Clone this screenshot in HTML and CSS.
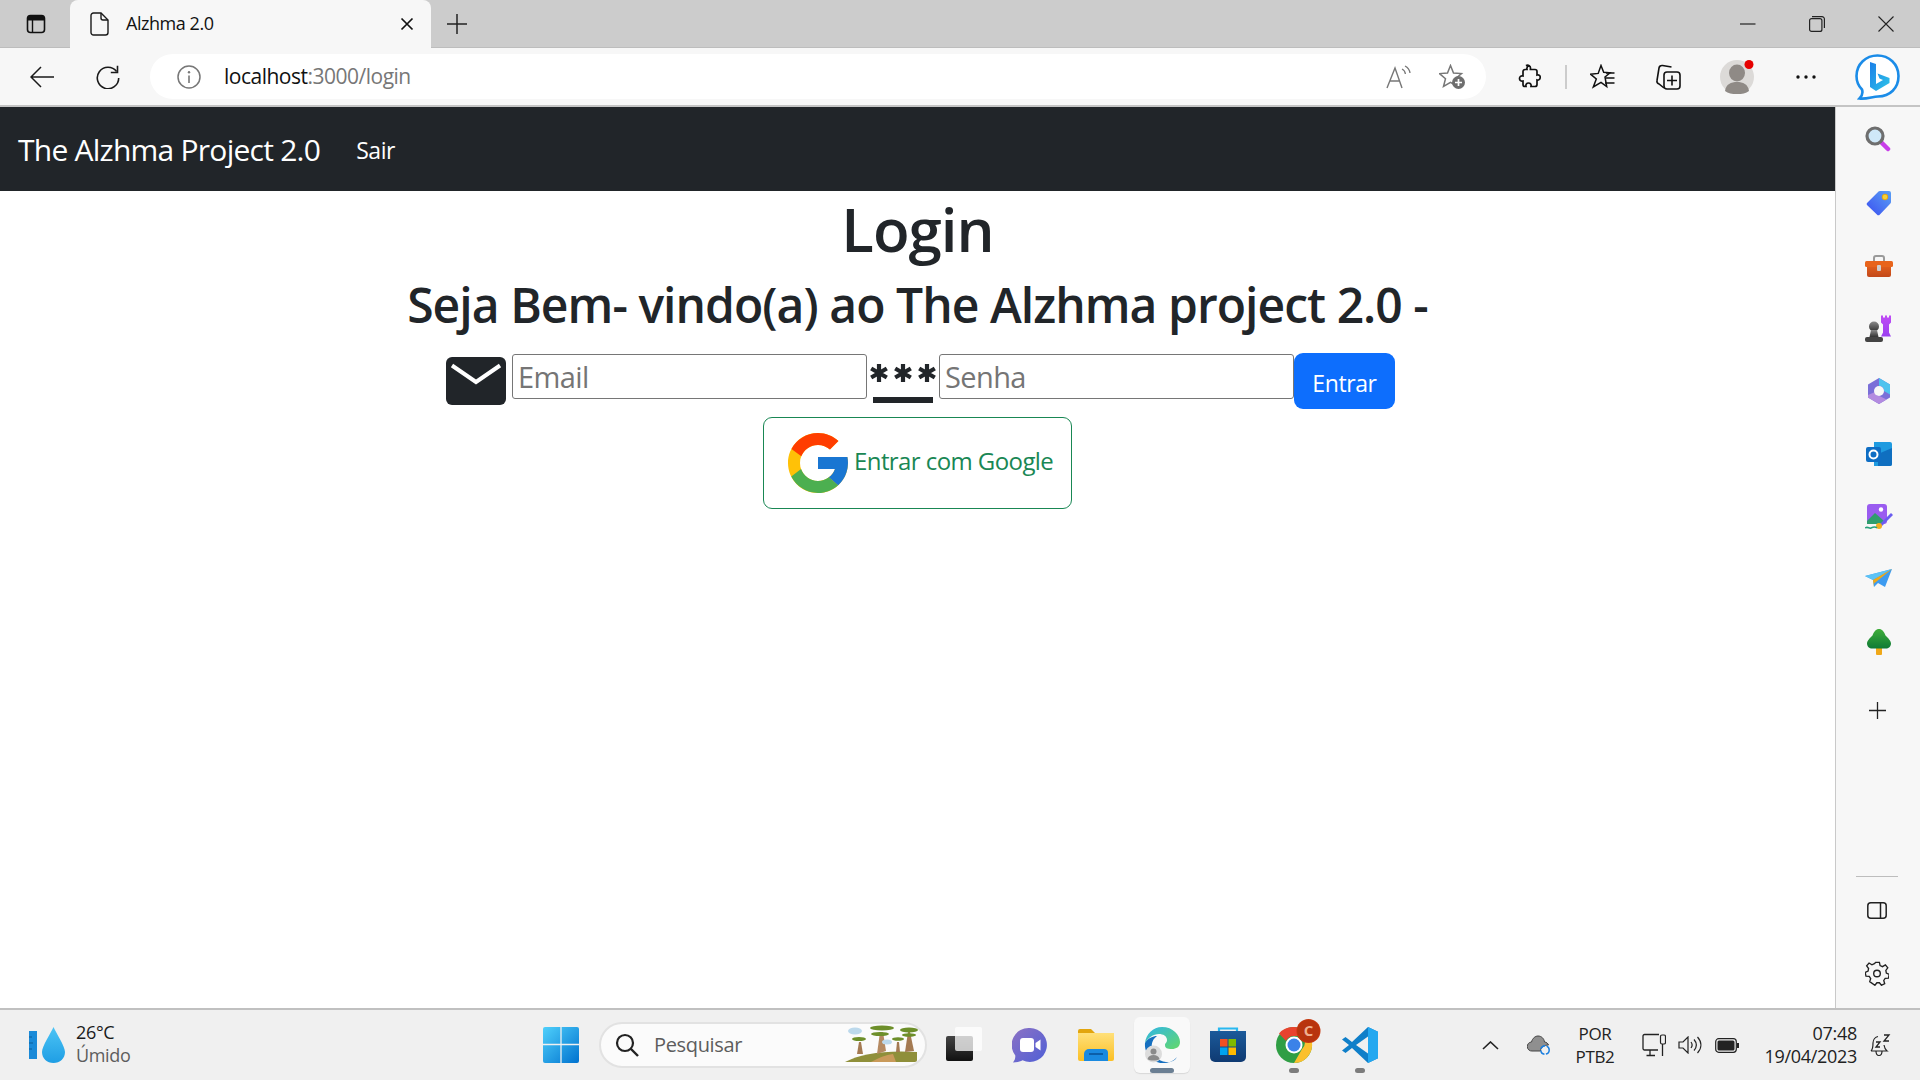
FILE: index.html
```html
<!DOCTYPE html>
<html lang="pt-BR">
<head>
<meta charset="utf-8">
<title>Alzhma 2.0</title>
<link rel="stylesheet" href="styles.css">
</head>
<body>
<svg class="defs" width="0" height="0">
  <defs>
    <linearGradient id="gWin" x1="0" y1="0" x2="1" y2="1"><stop offset="0" stop-color="#4fd0fb"/><stop offset="1" stop-color="#0072cf"/></linearGradient>
    <linearGradient id="gDrop" x1="0" y1="0" x2="0" y2="1"><stop offset="0" stop-color="#4cc4f5"/><stop offset="1" stop-color="#1f9ee4"/></linearGradient>
    <linearGradient id="gTag" x1="0" y1="1" x2="1" y2="0"><stop offset="0" stop-color="#3b4ff0"/><stop offset="1" stop-color="#5aa0f5"/></linearGradient>
    <linearGradient id="gBox" x1="0" y1="0" x2="0" y2="1"><stop offset="0" stop-color="#ee6a1f"/><stop offset="1" stop-color="#c2481a"/></linearGradient>
    <linearGradient id="gPawn" x1="0" y1="0" x2="0" y2="1"><stop offset="0" stop-color="#8a8a8a"/><stop offset="1" stop-color="#333"/></linearGradient>
    <linearGradient id="gRook" x1="0" y1="0" x2="0" y2="1"><stop offset="0" stop-color="#c04cf5"/><stop offset="1" stop-color="#9a3ff0"/></linearGradient>
    <linearGradient id="gTree" x1="0" y1="0" x2="0" y2="1"><stop offset="0" stop-color="#3fae3a"/><stop offset="1" stop-color="#0f7a35"/></linearGradient>
    <linearGradient id="gTeams" x1="0" y1="0" x2="1" y2="1"><stop offset="0" stop-color="#8c72c4"/><stop offset="1" stop-color="#4f5fd6"/></linearGradient>
    <linearGradient id="gEdge" x1="0" y1="0" x2="1" y2="1"><stop offset="0" stop-color="#2fb6e8"/><stop offset="1" stop-color="#63d86a"/></linearGradient>
    <linearGradient id="gFold" x1="0" y1="0" x2="0" y2="1"><stop offset="0" stop-color="#ffe07a"/><stop offset="1" stop-color="#fbbf24"/></linearGradient>
    <linearGradient id="gStore" x1="0" y1="0" x2="0" y2="1"><stop offset="0" stop-color="#1b5a9a"/><stop offset="1" stop-color="#0f3a72"/></linearGradient>
    <linearGradient id="gBing" x1="0" y1="0" x2="1" y2="1"><stop offset="0" stop-color="#1b7fe8"/><stop offset="1" stop-color="#2fc5e8"/></linearGradient>
    <linearGradient id="gTask" x1="0" y1="0" x2="0" y2="1"><stop offset="0" stop-color="#444"/><stop offset="1" stop-color="#111"/></linearGradient>
  </defs>
</svg>

<div class="tabstrip">
  <div class="strip-side">
    <svg width="20" height="20" viewBox="0 0 20 20"><rect x="1.5" y="1.5" width="17" height="17" rx="3" fill="none" stroke="#111" stroke-width="1.6"/><path d="M1.5 4.5a3 3 0 0 1 3-3h11a3 3 0 0 1 3 3v2h-17z" fill="#111"/><path d="M6.5 6v12" stroke="#111" stroke-width="1.4"/></svg>
  </div>
  <div class="tab">
    <svg class="tab-fav" width="19" height="24" viewBox="0 0 19 24"><path d="M3.5 1h7.5l7 7v12.5a2.5 2.5 0 0 1-2.5 2.5h-12a2.5 2.5 0 0 1-2.5-2.5v-17a2.5 2.5 0 0 1 2.5-2.5z" fill="none" stroke="#1a1a1a" stroke-width="1.4"/><path d="M11 1v5a2 2 0 0 0 2 2h5" fill="none" stroke="#1a1a1a" stroke-width="1.4"/></svg>
    <span class="tab-title">Alzhma 2.0</span>
    <svg class="tab-x" width="14" height="14" viewBox="0 0 14 14"><path d="M1.5 1.5l11 11M12.5 1.5l-11 11" stroke="#111" stroke-width="1.7"/></svg>
  </div>
  <svg class="tab-plus" width="20" height="20" viewBox="0 0 20 20"><path d="M10 0v20M0 10h20" stroke="#222" stroke-width="1.5"/></svg>
  <div class="win-ctrls">
    <div class="win-btn"><svg width="16" height="16" viewBox="0 0 16 16"><path d="M0 8h15.5" stroke="#222" stroke-width="1.2"/></svg></div>
    <div class="win-btn"><svg width="16" height="16" viewBox="0 0 16 16"><rect x=".6" y="2.6" width="12.3" height="12.8" rx="2" fill="none" stroke="#222" stroke-width="1.2"/><path d="M3 .6h10a2.4 2.4 0 0 1 2.4 2.4v9" fill="none" stroke="#222" stroke-width="1.2"/></svg></div>
    <div class="win-btn"><svg width="16" height="16" viewBox="0 0 16 16"><path d="M.5.5l15 15M15.5.5l-15 15" stroke="#222" stroke-width="1.1"/></svg></div>
  </div>
</div>

<div class="toolbar">
  <div class="tool"><svg width="24" height="22" viewBox="0 0 24 22"><path d="M1 11h23M11 1L1 11l10 10" fill="none" stroke="#1a1a1a" stroke-width="1.5"/></svg></div>
  <div class="tool"><svg width="24" height="24" viewBox="0 0 24 24"><path d="M20.6 6.6A10.7 10.7 0 1 0 22.7 13" fill="none" stroke="#1a1a1a" stroke-width="1.6"/><path d="M21.5 .8v6.7h-6.7" fill="none" stroke="#1a1a1a" stroke-width="1.6"/></svg></div>
  <div class="address">
    <svg class="addr-info" width="24" height="24" viewBox="0 0 24 24"><circle cx="12" cy="12" r="11" fill="none" stroke="#777" stroke-width="1.5"/><circle cx="12" cy="7.2" r="1.2" fill="#777"/><path d="M12 10.5v7.5" stroke="#777" stroke-width="1.6"/></svg>
    <span class="url"><span class="url-host">localhost</span>:3000/login</span>
    <svg class="addr-read" width="25" height="24" viewBox="0 0 25 24"><path d="M1 23L9 3l7 20M4 16h10" fill="none" stroke="#777" stroke-width="1.4"/><path d="M16 4c2 1 3.200 3 3.400 5M19 1c3 1.500 4.600 4 5 7" fill="none" stroke="#777" stroke-width="1.3"/></svg>
    <svg class="addr-star" width="27" height="26" viewBox="0 0 27 26"><path d="M11.500 1.500l3 7.500 8 .6-6 5.200 2 7.700-7-4.200-7 4.200 2-7.700-6-5.200 8-.6z" fill="none" stroke="#777" stroke-width="1.500"/><circle cx="19.500" cy="18.500" r="6.500" fill="#6e6e6e"/><path d="M19.500 15v7M16 18.500h7" stroke="#fff" stroke-width="1.700"/></svg>
  </div>
  <div class="tool-right">
    <svg class="t-ext" width="24" height="25" viewBox="0 0 24 25"><path d="M9 1.500c2.500-1 4.500.5 4.500 2.500l-.1 1.500h4.600a2 2 0 0 1 2 2v3.500c2-.6 3.400.8 3.200 2.500-.2 2-1.700 3-3.200 2.500v4.500a2 2 0 0 1-2 2h-4c.5-2-.6-3.500-2.500-3.500s-3 1.500-2.500 3.500h-1a2 2 0 0 1-2-2v-3.500c-2 .5-3.500-.6-3.500-2.500s1.500-3 3.500-2.500v-4.500c0-1.100.900-2 2-2h2c-.4-1.500 0-3 2-4z" fill="none" stroke="#111" stroke-width="1.700"/></svg>
    <div class="t-sep"></div>
    <svg class="t-fav" width="25" height="25" viewBox="0 0 25 25"><path d="M11 1.500l2.700 6.800 6.300.5-5 4.200 1.700 9.500-5.700-4.200-7.700 4.700 3-8-5.800-4.800 7.700-.8z" fill="none" stroke="#111" stroke-width="1.500"/><path d="M16 9h8.500M16 14h8.500M15 19h9.500" stroke="#111" stroke-width="1.500"/></svg>
    <svg class="t-col" width="26" height="26" viewBox="0 0 26 26"><path d="M9 24L4 20a3 3 0 0 1-2-3.500L4 4a3 3 0 0 1 3.500-2.500l9 1.500" fill="none" stroke="#111" stroke-width="1.600"/><rect x="9" y="8" width="16" height="17" rx="3" fill="#f7f7f7" stroke="#111" stroke-width="1.600"/><path d="M17 11.500v10M12 16.500h10" stroke="#111" stroke-width="1.600"/></svg>
    <svg class="t-ava" width="37" height="36" viewBox="0 0 37 36"><ellipse cx="17" cy="18" rx="17" ry="17" fill="#dcdad8"/><ellipse cx="17" cy="14" rx="8" ry="8.500" fill="#8f8a86"/><path d="M5 32c1-7 6-9 12-9s11 2 12 9c-3 2.500-7 3-12 3s-9-.5-12-3z" fill="#8f8a86"/><circle cx="29" cy="5.500" r="4.500" fill="#e60000"/></svg>
    <svg class="t-dots" width="20" height="4" viewBox="0 0 20 4"><circle cx="2" cy="2" r="1.700" fill="#111"/><circle cx="10" cy="2" r="1.700" fill="#111"/><circle cx="18" cy="2" r="1.700" fill="#111"/></svg>
    <svg class="t-bing" width="45" height="46" viewBox="0 0 45 46"><path d="M22.500 1.500C34 1.500 43.500 10 43.500 22S35 42.500 23 42.500c-5 0-12 3-18.500 2 3-3 3.500-6 2.500-9C3.500 32 1.500 27 1.500 22 1.500 10 11 1.500 22.500 1.500z" fill="#fff" stroke="#1b8ce8" stroke-width="2.600"/><path d="M15 8l6 2v20l7-4-3.500-1.500-2-5 12 4.500v5l-13.500 8-6-4z" fill="url(#gBing)"/></svg>
  </div>
</div>

<div class="middle">
  <main class="page">
    <nav class="navbar">
      <a class="brand">The Alzhma Project 2.0</a>
      <a class="nav-link">Sair</a>
    </nav>
    <h1 class="title">Login</h1>
    <h2 class="subtitle">Seja Bem- vindo(a) ao The Alzhma project 2.0 -</h2>
    <form class="login-row">
      <svg class="mail-icon" width="60" height="48" viewBox="0 0 60 48"><rect width="60" height="48" rx="6" fill="#212529"/><path d="M6 8.500L30 25 54 8.500" fill="none" stroke="#fff" stroke-width="4"/></svg>
      <input class="field" type="text" placeholder="Email">
      <svg class="pass-icon" width="66" height="48" viewBox="0 0 66 48"><g stroke="#212529" stroke-width="4.200"><path d="M9 9v18M1.200 13.500l15.600 9M1.200 22.500l15.600-9"/><path d="M33 9v18M25.200 13.500l15.600 9M25.200 22.500l15.600-9"/><path d="M57 9v18M49.200 13.500l15.600 9M49.200 22.500l15.600-9"/></g><rect x="3" y="42" width="60" height="6" fill="#212529"/></svg>
      <input class="field" type="password" placeholder="Senha">
      <button class="btn-primary" type="button">Entrar</button>
    </form>
    <button class="btn-google" type="button">
      <svg width="60" height="60" viewBox="4 4 40 40"><path fill="#FFC107" d="M43.611,20.083H42V20H24v8h11.303c-1.649,4.657-6.08,8-11.303,8c-6.627,0-12-5.373-12-12c0-6.627,5.373-12,12-12c3.059,0,5.842,1.154,7.961,3.039l5.657-5.657C34.046,6.053,29.268,4,24,4C12.955,4,4,12.955,4,24c0,11.045,8.955,20,20,20c11.045,0,20-8.955,20-20C44,22.659,43.862,21.35,43.611,20.083z"/><path fill="#FF3D00" d="M6.306,14.691l6.571,4.819C14.655,15.108,18.961,12,24,12c3.059,0,5.842,1.154,7.961,3.039l5.657-5.657C34.046,6.053,29.268,4,24,4C16.318,4,9.656,8.337,6.306,14.691z"/><path fill="#4CAF50" d="M24,44c5.166,0,9.86-1.977,13.409-5.192l-6.19-5.238C29.211,35.091,26.715,36,24,36c-5.202,0-9.619-3.317-11.283-7.946l-6.522,5.025C9.505,39.556,16.227,44,24,44z"/><path fill="#1976D2" d="M43.611,20.083H42V20H24v8h11.303c-0.792,2.237-2.231,4.166-4.087,5.571c0.001-0.001,0.002-0.001,0.003-0.002l6.19,5.238C36.971,39.205,44,34,44,24C44,22.659,43.862,21.35,43.611,20.083z"/></svg>
      <span class="google-label">Entrar com Google</span>
    </button>
  </main>
  <aside class="sidebar">
    <svg class="sb s1" width="26" height="26" viewBox="0 0 26 26"><path d="M16 16l7 7" stroke="#c83fe8" stroke-width="4.500" stroke-linecap="round"/><circle cx="10" cy="10" r="8" fill="#cfe8f8" stroke="#6e6e6e" stroke-width="3.200"/></svg>
    <svg class="sb s2" width="26" height="26" viewBox="0 0 26 26"><path d="M14 1h9a2 2 0 0 1 2 2v9a2 2 0 0 1-.6 1.500l-10.500 11a2 2 0 0 1-3 0L1.500 15.500a2 2 0 0 1 0-3L12.500 1.600A2 2 0 0 1 14 1z" fill="url(#gTag)"/><circle cx="19" cy="7" r="2.800" fill="#f4d13a" stroke="#e8a80c"/></svg>
    <svg class="sb s3" width="28" height="23" viewBox="0 0 28 23"><path d="M9 6V3a2 2 0 0 1 2-2h6a2 2 0 0 1 2 2v3" fill="none" stroke="#9a9a9a" stroke-width="2"/><rect x="2" y="6" width="24" height="16" rx="2" fill="url(#gBox)"/><rect y="6" width="28" height="6" rx="1.500" fill="#e8641c"/><rect x="12" y="10" width="4" height="6" rx="1" fill="#cfcfcf"/></svg>
    <svg class="sb s4" width="28" height="28" viewBox="0 0 28 28"><path d="M16 1h2v2h2V1h2v2h2V1h2v7l-2 2v8l2 4H16l2-4v-8l-2-2z" fill="url(#gRook)" transform="translate(0 -.5)"/><circle cx="9" cy="11.500" r="5" fill="url(#gPawn)"/><path d="M6 15h6l1.500 7h-9z" fill="url(#gPawn)"/><rect y="22" width="18" height="5" rx="2" fill="#444"/></svg>
    <svg class="sb s5" width="26" height="26" viewBox="0 0 26 26"><path d="M13 0l11 6.500v13L13 26 2 19.500v-13z" fill="#7a6fd8"/><path d="M13 0l11 6.500v10l-6-3.500c0-3-2-5-5-5z" fill="#4fc3ee"/><path d="M2 17l7-3c.500 2.500 2 4 4.500 4l7 3.500L13 26 2 19.500z" fill="#b38be0"/><circle cx="13" cy="13" r="5" fill="#f7f7f7"/></svg>
    <svg class="sb s6" width="26" height="24" viewBox="0 0 26 24"><path d="M8 0h16a2 2 0 0 1 2 2v20a2 2 0 0 1-2 2H8z" fill="#1f9be0"/><path d="M12 12l14-6v16a2 2 0 0 1-2 2H12z" fill="#0f6fc0"/><rect y="5" width="15" height="15" rx="2" fill="#0f6ec4"/><circle cx="7.500" cy="12.500" r="4" fill="none" stroke="#fff" stroke-width="2"/></svg>
    <svg class="sb s7" width="28" height="27" viewBox="0 0 28 27"><rect x="2" y="0" width="20" height="20" rx="3" fill="#9a5cf0"/><circle cx="16" cy="5.500" r="2.200" fill="#fff"/><path d="M2 17l8-8 9 8v3H2z" fill="#2f9e6e"/><path d="M14 21L26 9l2 2-12 12z" fill="#6a5cf0"/><circle cx="14" cy="22" r="3" fill="#f0b020"/><path d="M0 24c3-2 4 1 6 0s4-2 6 0" fill="none" stroke="#26a17a" stroke-width="1.500"/></svg>
    <svg class="sb s8" width="27" height="20" viewBox="0 0 27 20"><path d="M0 7L27 0 20 18l-7-4-4 4-1-7z" fill="#3d9bf0"/><path d="M0 7l27-7-19 11z" fill="#5cc3f5"/><path d="M8 11L27 0 9 14.500 9 18z" fill="#f0a818"/></svg>
    <svg class="sb s9" width="24" height="26" viewBox="0 0 24 26"><rect x="9" y="18" width="6" height="8" rx="1" fill="#f0a818"/><path d="M12 0c3 0 5 2.500 6.500 6.500 2 2 5.500 5 5.500 8 0 3-2.500 5-5 5H5c-2.500 0-5-2-5-5 0-3 3.500-6 5.500-8C7 2.500 9 0 12 0z" fill="url(#gTree)"/></svg>
    <svg class="sb s10" width="17" height="17" viewBox="0 0 17 17"><path d="M8.500 0v17M0 8.500h17" stroke="#222" stroke-width="1.300"/></svg>
    <div class="sb-spacer"></div>
    <div class="sb-sep"></div>
    <svg class="sb s11" width="20" height="17" viewBox="0 0 20 17"><rect x=".8" y=".8" width="18.400" height="15.400" rx="3" fill="none" stroke="#222" stroke-width="1.500"/><path d="M13.500 1v15" stroke="#222" stroke-width="1.500"/></svg>
    <svg class="sb s12" width="24" height="25" viewBox="0 0 24 25"><path d="M10 1h4l.7 3.300 2.500 1.100 3-1.800 2.500 3-2 2.700.5 2.700 3 1.500-.8 3.800-3.400.2-1.500 2.300 1 3.200-3.400 1.800-2.100-2.600h-2.600l-2.100 2.600L3.900 21l1-3.200L3.400 15.500 0 15.300l-.8-3.800 3-1.500.5-2.700-2-2.700 2.500-3 3 1.800 2.500-1.100z" transform="translate(.5 0) scale(.96 .96) translate(.5 .5)" fill="none" stroke="#222" stroke-width="1.400"/><circle cx="12" cy="12.500" r="3.300" fill="none" stroke="#222" stroke-width="1.400"/></svg>
  </aside>
</div>

<footer class="taskbar">
  <div class="weather">
    <svg width="36" height="36" viewBox="0 0 36 36"><rect y="4" width="8" height="28" fill="#1a8ad8"/><path d="M0 10h3M0 16h4M0 22h3" stroke="#0d5f9a" stroke-width="1.200"/><path d="M24.500 0c2.500 6 11.500 19 11.500 25 0 6.500-5 11-11.500 11S13 31.500 13 25C13 19 22 6 24.500 0z" fill="url(#gDrop)"/></svg>
    <div class="weather-text"><span class="w-temp">26°C</span><span class="w-cond">Úmido</span></div>
  </div>
  <div class="task-center">
    <svg class="t-win" width="36" height="36" viewBox="0 0 36 36"><g fill="url(#gWin)"><rect width="36" height="36" rx="2"/></g><path d="M18 0v36M0 17.500h36" stroke="#f0f0f0" stroke-width="1.300"/></svg>
    <div class="searchbox">
      <svg width="24" height="24" viewBox="0 0 24 24"><circle cx="10" cy="10" r="8" fill="none" stroke="#222" stroke-width="2.200"/><path d="M16 16l7 7" stroke="#222" stroke-width="2.400"/></svg>
      <span class="search-label">Pesquisar</span>
      <svg class="search-art" width="74" height="40" viewBox="0 0 74 40"><path d="M0 38c15-8 40-12 72-10v8c0 2-2 2-4 2z" fill="#8f8f3a"/><path d="M26 38c10-5 14-7 22-8l3 8z" fill="#c99a5a"/><path d="M32 30l3-22h3l3 19z" fill="#b58a62"/><path d="M60 28l3-20h2l4 19z" fill="#a47a52"/><path d="M12 30l2-12h2l2 12z" fill="#a47a52"/><path d="M51 28l1-10h2l1 10z" fill="#a47a52"/><g fill="#6d8f2a"><ellipse cx="37" cy="4" rx="12" ry="2.500"/><ellipse cx="35" cy="10" rx="9" ry="2"/><ellipse cx="64" cy="6" rx="9" ry="2.500"/><ellipse cx="64" cy="11" rx="7" ry="1.800"/><ellipse cx="14" cy="15" rx="7" ry="2"/><ellipse cx="53" cy="15" rx="6" ry="1.800"/></g><ellipse cx="10" cy="7" rx="7" ry="3.500" fill="#bcd9ec"/><ellipse cx="42" cy="18" rx="5" ry="2.500" fill="#bcd9ec"/></svg>
    </div>
    <div class="task-slots">
      <div class="slot"><svg width="36" height="35" viewBox="0 0 36 35"><rect y="9" width="27" height="25" rx="2" fill="url(#gTask)"/><rect x="9" y="0" width="27" height="24" rx="2" fill="#fff" fill-opacity=".75"/></svg></div>
      <div class="slot"><svg width="36" height="36" viewBox="0 0 36 36"><path d="M18 1a17 17 0 1 1-7.500 32.300C8 35 4 35.500 1 35.500c1.500-2 2.500-4 2.300-7A17 17 0 0 1 18 1z" fill="url(#gTeams)"/><rect x="8" y="11" width="14" height="14" rx="3" fill="#fff"/><path d="M23.500 16l5-3.500v11l-5-3.500z" fill="#fff"/></svg></div>
      <div class="slot"><svg width="36" height="33" viewBox="0 0 36 33"><path d="M0 3a2 2 0 0 1 2-2h11l4 4h17a2 2 0 0 1 2 2v4H0z" fill="#e2a50e"/><path d="M0 5h36v26a2 2 0 0 1-2 2H2a2 2 0 0 1-2-2z" fill="url(#gFold)"/><path d="M6 33v-7a5 5 0 0 1 5-5h15a4 4 0 0 1 4 4v8z" fill="#1a8ae0"/><rect x="11" y="25" width="14" height="2" fill="#0c5fa8"/></svg></div>
      <div class="slot slot-active"><svg width="36" height="36" viewBox="0 0 36 36"><path d="M1 16C2 7 9 0 18 0c11 0 18 8 18 15 0 5-4 7-8 7-5 0-7-1-7-4 0-2 2-2 2-5 0-4-4-6-8-6-6 0-11 4-14 9z" fill="url(#gEdge)"/><path d="M1 16c3-5 8-7 12-7-4 3-6 7-5 13 1 6 6 12 14 13 5 .7 9-1 11-5-4 4-7 6-15 6C9 36 0 27 1 16z" fill="#1670c0"/><circle cx="9.500" cy="27" r="8.500" fill="#dcdcdc"/><circle cx="9.500" cy="24.500" r="3" fill="#8a8a8a"/><path d="M3.500 32c1-3 3-4 6-4s5 1 6 4c-2 2-10 2-12 0z" fill="#8a8a8a"/></svg><span class="active-bar"></span></div>
      <div class="slot"><svg width="36" height="35" viewBox="0 0 36 35"><path d="M9 5V1.500h18V5" fill="none" stroke="#28b8f0" stroke-width="2.200"/><path d="M0 4h36v26a5 5 0 0 1-5 5H5a5 5 0 0 1-5-5z" fill="url(#gStore)"/><rect x="10" y="12" width="7.500" height="7.500" fill="#f25022"/><rect x="18.500" y="12" width="7.500" height="7.500" fill="#7fba00"/><rect x="10" y="20.500" width="7.500" height="7.500" fill="#00a4ef"/><rect x="18.500" y="20.500" width="7.500" height="7.500" fill="#ffb900"/></svg></div>
      <div class="slot"><svg class="chrome" width="45" height="44" viewBox="0 0 45 44"><g transform="translate(0 8)"><circle cx="18" cy="18" r="18" fill="#2f9e44"/><path d="M18 0a18 18 0 0 1 15.600 9H18a9 9 0 0 0-8 5L3 6.500A18 18 0 0 1 18 0z" fill="#e8432e"/><path d="M33.600 9A18 18 0 0 1 18 36l7.800-13.500A9 9 0 0 0 26 9z" fill="#fbc02d"/><circle cx="18" cy="18" r="8.500" fill="#fff"/><circle cx="18" cy="18" r="6.500" fill="#3b82e8"/></g><circle cx="32.500" cy="12" r="12" fill="#c5380f"/><circle cx="32.500" cy="12" r="11" fill="#b8340e"/><text class="chrome-c" x="32.500" y="17">C</text></svg><span class="run-dot"></span></div>
      <div class="slot"><svg width="36" height="36" viewBox="0 0 36 36"><path d="M26 0l10 4.800v26.400L26 36 10 21 3.500 26 0 23.500 7 18 0 12.500 3.500 10 10 15z" fill="#0f7fc9"/><path d="M26 0l10 4.800v26.400L26 36z" fill="#24a8f0"/><path d="M26 9.500L14 18l12 8.500z" fill="#f0f0f0"/></svg><span class="run-dot"></span></div>
    </div>
  </div>
  <div class="tray">
    <svg class="tr-chev" width="17" height="9" viewBox="0 0 17 9"><path d="M1 8l7.500-7L16 8" fill="none" stroke="#222" stroke-width="1.600"/></svg>
    <svg class="tr-cloud" width="24" height="20" viewBox="0 0 24 20"><path d="M5 16a4.500 4.500 0 0 1-.5-9C5.500 3 8.500 1 11 1c3.500 0 6 2.500 6.500 6 2 .2 3.500 1.500 4 3-4 0-8 2-8 6z" fill="#8f8f8f" stroke="#444" stroke-width="1"/><circle cx="18" cy="15" r="4.200" fill="none" stroke="#1a7fe0" stroke-width="1.500" stroke-dasharray="5.500 1.500"/></svg>
    <div class="lang"><span>POR</span><span>PTB2</span></div>
    <svg class="tr-mon" width="24" height="24" viewBox="0 0 24 24"><path d="M16 17H2.500a1.500 1.500 0 0 1-1.500-1.500V3a1.500 1.500 0 0 1 1.500-1.500H17" fill="none" stroke="#222" stroke-width="1.300"/><path d="M8 17v5M4.500 22.500H13" stroke="#222" stroke-width="1.300"/><rect x="18.500" y="2" width="5" height="9" rx="1.500" fill="none" stroke="#222" stroke-width="1.200"/><path d="M20.500 11v12" stroke="#222" stroke-width="1.300"/></svg>
    <svg class="tr-vol" width="24" height="18" viewBox="0 0 24 18"><path d="M1 6h4l5-5v16l-5-5H1z" fill="none" stroke="#222" stroke-width="1.200"/><path d="M13 6c1.500 2 1.500 4 0 6M16 3.500c3 3.500 3 7.500 0 11M19.500 1c4.500 5 4.500 11 0 16" fill="none" stroke="#222" stroke-width="1.200"/></svg>
    <svg class="tr-bat" width="24" height="15" viewBox="0 0 24 15"><rect x=".7" y=".7" width="20.600" height="13.600" rx="3" fill="none" stroke="#222" stroke-width="1.200"/><rect x="2.500" y="2.500" width="17" height="10" rx="1.500" fill="#222"/><rect x="22" y="5" width="2" height="5" fill="#222"/></svg>
    <div class="clock"><span>07:48</span><span>19/04/2023</span></div>
    <svg class="tr-bell" width="21" height="24" viewBox="0 0 21 24"><path d="M1 18c2-2 2-4 2-8 0-3.500 2.500-6 5-6.500M14 12c.5 3 1 4.500 3 6H1" fill="none" stroke="#222" stroke-width="1.200"/><path d="M6 18c0 3 1.500 4.500 3 4.500s3-1.500 3-4.500" fill="none" stroke="#222" stroke-width="1.200"/><path d="M6 9h4l-4 5h4M14 2h5l-5 6h5" fill="none" stroke="#222" stroke-width="1.300"/></svg>
  </div>
</footer>
</body>
</html>
```

FILE: styles.css
```css
* { box-sizing: border-box; }
html, body { margin: 0; padding: 0; }
body {
  width: 1920px;
  height: 1080px;
  overflow: hidden;
  display: flex;
  flex-direction: column;
  background: #fff;
  color: #212529;
  font-family: "Open Sans", "Noto Sans", sans-serif;
}
svg { display: block; flex: none; }
.defs { position: absolute; }

/* tab strip */
.tabstrip {
  height: 47px;
  flex: none;
  background: #cccccc;
  display: flex;
  align-items: center;
  border-bottom: 1px solid #bdbdbd;
  box-sizing: content-box;
}
.strip-side { width: 70px; padding-left: 26px; }
.tab {
  width: 361px;
  height: 48px;
  margin-bottom: -1px;
  align-self: flex-start;
  background: #f7f7f7;
  border-radius: 8px 8px 0 0;
  display: flex;
  align-items: center;
  padding-left: 20px;
}
.tab-title { font-size: 18px; line-height: 24px; margin-top: -2px; color: #111; margin-left: 17px; letter-spacing: -.45px; flex: 1; }
.tab-x { margin-right: 17px; }
.tab-plus { margin-left: 16px; }
.win-ctrls { margin-left: auto; display: flex; }
.win-btn { width: 69px; height: 47px; display: flex; align-items: center; justify-content: center; }

/* toolbar */
.toolbar {
  height: 59px;
  flex: none;
  background: #f7f7f7;
  border-bottom: 2px solid #c4c4c4;
  display: flex;
  align-items: center;
  padding-left: 9px;
}
.tool { width: 66px; display: flex; justify-content: center; }
.address {
  width: 1336px;
  height: 45px;
  margin-left: 9px;
  background: #fff;
  border-radius: 23px;
  display: flex;
  align-items: center;
  padding-left: 27px;
}
.url { font-size: 21px; line-height: 28px; margin-top: -1px; color: #777; margin-left: 23px; flex: 1; letter-spacing: -.5px; }
.url-host { color: #111; }
.addr-read { margin-right: 28px; }
.addr-star { margin-right: 20px; }
.tool-right { display: flex; align-items: center; margin-left: 31px; }
.t-sep { width: 2px; height: 24px; background: #ccc; margin-left: 24px; }
.t-fav { margin-left: 23px; }
.t-col { margin-left: 40px; }
.t-ava { margin-left: 39px; }
.t-dots { margin-left: 39px; }
.t-bing { margin-left: 39px; }

/* middle */
.middle { flex: 1; display: flex; min-height: 0; }
.page { width: 1835px; flex: none; display: flex; flex-direction: column; align-items: center; }
.navbar {
  width: 100%;
  height: 84px;
  flex: none;
  background: #212529;
  display: flex;
  align-items: center;
  padding-left: 18px;
  color: #fff;
}
.brand { font-size: 30px; letter-spacing: -.75px; }
.nav-link { font-size: 23px; margin-left: 36px; margin-top: 2px; letter-spacing: -.4px; }
.title { margin: 2px 0 11px; font-size: 60px; line-height: 72px; font-weight: 600; letter-spacing: -1px; }
.subtitle { margin: 0 0 19px; font-size: 48px; line-height: 58px; font-weight: 600; letter-spacing: -.95px; }
.login-row { display: flex; align-items: flex-start; justify-content: center; width: 100%; padding-left: 6px; height: 56px; flex: none; }
.mail-icon { margin-top: 4px; margin-right: 6px; }
.field {
  width: 355px;
  height: 45px;
  margin-top: 1px;
  padding: 0 5px 1px;
  border: 1.5px solid #767676;
  border-radius: 3px;
  font: 400 29px "Open Sans", sans-serif;
  letter-spacing: -.6px;
  background: #fff;
  outline: none;
}
.field::placeholder { color: #757575; opacity: 1; }
.pass-icon { margin: 2px 3px 0; width: 66px; }
.btn-primary {
  width: 101px;
  height: 56px;
  background: #0d6efd;
  color: #fff;
  border: 0;
  border-radius: 9px;
  font: 400 23px "Open Sans", sans-serif;
  letter-spacing: -.4px;
  padding: 3px 0 0;
}
.btn-google {
  width: 309px;
  height: 92px;
  margin-top: 8px;
  background: #fff;
  border: 1.5px solid #198754;
  border-radius: 9px;
  color: #198754;
  display: flex;
  align-items: center;
  padding: 0 0 0 24px;
  font: 400 24px "Open Sans", sans-serif;
  letter-spacing: -.58px;
}
.google-label { margin-left: 6px; margin-top: -6px; white-space: nowrap; }

/* sidebar */
.sidebar {
  width: 85px;
  flex: none;
  background: #f7f7f7;
  border-left: 1px solid #c9c9c9;
  display: flex;
  flex-direction: column;
  align-items: center;
  padding-top: 19px;
  padding-bottom: 22px;
}
.sb { margin-left: 1px; }
.s1 { margin-left: 0; }
.s2 { margin-top: 38px; }
.s3 { margin-top: 39px; }
.s4 { margin-top: 37px; }
.s5 { margin-top: 35px; }
.s6 { margin-top: 38px; }
.s7 { margin-top: 38px; }
.s8 { margin-top: 38px; }
.s9 { margin-top: 40px; }
.s10 { margin-top: 47px; margin-left: -2px; }
.sb-spacer { flex: 1; }
.sb-sep { width: 42px; height: 1px; background: #bdbdbd; margin-left: -2px; }
.s11 { margin-top: 25px; margin-left: -3px; }
.s12 { margin-top: 42px; margin-left: -2px; }

/* taskbar */
.taskbar {
  height: 72px;
  flex: none;
  background: #f0f0f0;
  border-top: 2px solid #c0c0c0;
  display: flex;
  align-items: center;
}
.weather { display: flex; align-items: center; padding-left: 29px; width: 543px; }
.weather-text { display: flex; flex-direction: column; margin-left: 11px; margin-top: -2px; font-size: 18px; line-height: 23px; letter-spacing: -.35px; }
.w-temp { color: #1a1a1a; }
.w-cond { color: #5d5d5d; }
.task-center { display: flex; align-items: center; margin-top: -1px; }
.searchbox {
  width: 328px;
  height: 46px;
  margin-left: 20px;
  background: #fbfbfb;
  border: 2px solid #e2e2e2;
  border-radius: 23px;
  display: flex;
  align-items: center;
  padding-left: 14px;
}
.search-label { font-size: 20px; color: #5d5d5d; margin-left: 15px; letter-spacing: -.35px; flex: 1; }
.search-art { margin-right: 6px; margin-top: -2px; }
.task-slots { display: flex; margin-left: 4px; }
.slot { width: 66px; height: 56px; display: flex; align-items: center; justify-content: center; position: relative; border-radius: 6px; }
.slot-active { background: #f9f9f9; box-shadow: 0 1px 1px #d8d8d8; width: 56px; margin: 0 5px; }
.active-bar { position: absolute; left: 16px; bottom: 0; width: 24px; height: 5px; border-radius: 3px; background: #6b7f93; }
.run-dot { position: absolute; left: 28px; bottom: 0; width: 10px; height: 5px; border-radius: 3px; background: #7c7c7c; }
.chrome { margin-left: 9px; margin-top: -8px; }
.chrome-c { font: 700 15px "Open Sans", sans-serif; fill: #f0b090; text-anchor: middle; }
.tray { display: flex; align-items: center; margin-left: 89px; flex: 1; }
.tr-cloud { margin-left: 28px; }
.lang { display: flex; flex-direction: column; align-items: center; width: 44px; margin-left: 22px; margin-top: -1px; font-size: 17px; line-height: 23px; color: #222; letter-spacing: -.3px; }
.tr-mon { margin-left: 25px; }
.tr-vol { margin-left: 12px; }
.tr-bat { margin-left: 13px; }
.clock { display: flex; flex-direction: column; align-items: flex-end; width: 118px; margin-top: -1px; font-size: 18px; line-height: 23px; color: #222; letter-spacing: -.3px; }
.tr-bell { margin-left: 13px; }
```
